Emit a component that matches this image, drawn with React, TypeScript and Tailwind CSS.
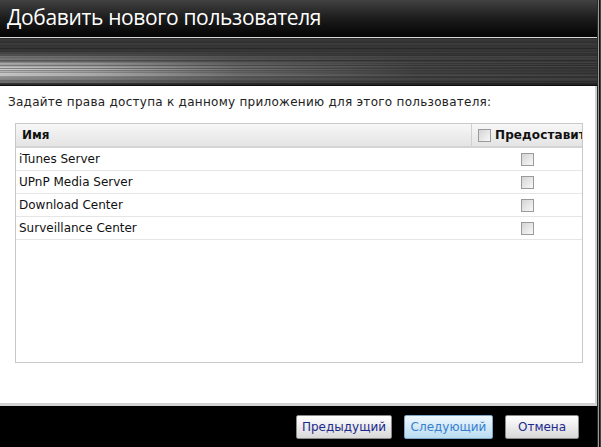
import React from "react";

const apps = ["iTunes Server", "UPnP Media Server", "Download Center", "Surveillance Center"];

// deterministic pseudo-random for the brushed-metal streaks
const rnd = (i: number, s: number) => {
  const x = Math.sin(i * 12.9898 + s * 78.233) * 43758.5453;
  return x - Math.floor(x);
};

function Streaks() {
  const h = 47;
  const rows = Array.from({ length: h }, (_, y) => {
    const base = 40 + Math.round(rnd(y, 1) * 24);
    const t = y / (h - 1);
    // bright sheen lives in the lower half, strongest around 70-80%
    const sheen = Math.max(0, 1 - Math.abs(t - 0.7) / 0.42);
    const glow = Math.min(1, sheen * (0.5 + rnd(y, 2) * 0.7));
    return { y, base, glow };
  });
  return (
    <svg width="597" height={h} viewBox={`0 0 597 ${h}`} className="block">
      <defs>
        <linearGradient id="fade" x1="0" y1="0" x2="1" y2="0">
          <stop offset="0" stopColor="#ffffff" stopOpacity="0.85" />
          <stop offset="0.15" stopColor="#ffffff" stopOpacity="0.7" />
          <stop offset="0.4" stopColor="#ffffff" stopOpacity="0.32" />
          <stop offset="0.7" stopColor="#ffffff" stopOpacity="0.08" />
          <stop offset="1" stopColor="#ffffff" stopOpacity="0.02" />
        </linearGradient>
      </defs>
      {rows.map((r) => (
        <rect key={`b${r.y}`} x="0" y={r.y} width="597" height="1" fill={`rgb(${r.base},${r.base},${r.base})`} />
      ))}
      {rows.map((r) =>
        r.glow > 0 ? (
          <rect key={`g${r.y}`} x="0" y={r.y} width="597" height="1" fill="url(#fade)" opacity={r.glow} />
        ) : null
      )}
      <rect x="0" y={h - 2} width="597" height="2" fill="#1a1a1a" opacity="0.7" />
    </svg>
  );
}

function Box() {
  return (
    <span className="inline-block shrink-0 w-[13px] h-[13px] border border-[#9a9a9a] bg-gradient-to-br from-[#d4d4d4] to-[#f8f8f8] align-middle" />
  );
}

export default function App() {
  return (
    <div
      className="w-[601px] h-[447px] flex bg-black overflow-hidden"
      style={{ fontFamily: '"DejaVu Sans", Verdana, sans-serif' }}
    >
      <div className="w-[597px] flex flex-col">
        <div className="h-[37px] bg-gradient-to-b from-[#424242] via-[#1c1c1c] to-[#050505] pl-[7px] flex items-start">
          <h1
            className="text-white text-[21px] leading-[35px] tracking-[-0.35px]"
            style={{ fontFamily: '"Open Sans", "Noto Sans", sans-serif', fontWeight: 400 }}
          >
            Добавить нового пользователя
          </h1>
        </div>
        <div className="h-px bg-[#d6d6d6]" />
        <Streaks />
        <div className="h-px bg-[#0e0e0e]" />
        <div className="h-[317px] bg-white border-r-2 border-[#cfcfcf] flex flex-col pt-[9px]">
          <p className="pl-[8px] text-[12px] leading-[15px] tracking-[0.27px] text-[#222]">
            Задайте права доступа к данному приложению для этого пользователя:
          </p>
          <div className="ml-[15px] mt-[13px] w-[568px] h-[240px] border border-[#c9c9c9] overflow-hidden flex flex-col">
            <div className="h-[24px] flex border-b-2 border-[#d4d4d4] bg-gradient-to-b from-[#f7f7f7] to-[#e4e4e4] text-[12px] font-bold text-[#111]">
              <div className="w-[456px] shrink-0 border-r border-[#cfcfcf] pl-[6px] flex items-center">Имя</div>
              <div className="flex-1 flex items-center pl-[6px] gap-[4px] whitespace-nowrap overflow-hidden tracking-[0.1px]">
                <Box />
                <span>Предоставить</span>
              </div>
            </div>
            {apps.map((a) => (
              <div key={a} className="h-[23px] flex items-center border-b border-[#e6e6e6] text-[12px] text-[#111]">
                <div className="w-[456px] shrink-0 pl-[3px]">{a}</div>
                <div className="flex-1 flex justify-center">
                  <Box />
                </div>
              </div>
            ))}
          </div>
        </div>
        <div className="h-[3px] bg-[#d2d2d2]" />
        <div className="flex-1 bg-black flex justify-end items-start pt-[9px] pr-[18px] gap-[12px] text-[12px]">
          <button className="w-[96px] h-[24px] rounded-[2px] border border-[#8a8a8a] bg-gradient-to-b from-[#ffffff] to-[#d8d8d8] text-[#1c2a8e]">
            Предыдущий
          </button>
          <button className="w-[89px] h-[24px] rounded-[2px] border border-[#7ea6c4] bg-gradient-to-b from-[#eef7fd] to-[#b9dcf1] text-[#3a7fcf]">
            Следующий
          </button>
          <button className="w-[74px] h-[24px] rounded-[2px] border border-[#8a8a8a] bg-gradient-to-b from-[#ffffff] to-[#d8d8d8] text-[#1c2a8e]">
            Отмена
          </button>
        </div>
      </div>
      <div className="w-[4px] flex">
        <div className="w-[1px] bg-[#2a2a2a]" />
        <div className="w-[1px] bg-[#9a9a9a]" />
        <div className="w-[1px] bg-[#111]" />
        <div className="w-[1px] bg-[#444]" />
      </div>
    </div>
  );
}
